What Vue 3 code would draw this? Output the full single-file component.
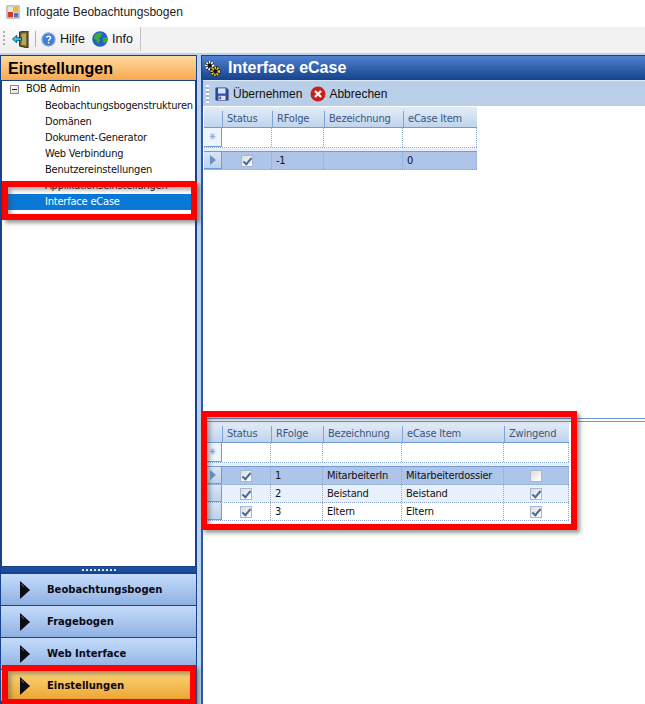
<script setup>
const tree = ['Beobachtungsbogenstrukturen','Domänen','Dokument-Generator','Web Verbindung','Benutzereinstellungen','Applikationseinstellungen']
const nav = [
  { label: 'Beobachtungsbogen', active: false },
  { label: 'Fragebogen', active: false },
  { label: 'Web Interface', active: false },
  { label: 'Einstellungen', active: true }
]
const topCols = [['Status',50],['RFolge',52],['Bezeichnung',79],['eCase Item',74]]
const botCols = [['Status',49],['RFolge',52],['Bezeichnung',79],['eCase Item',102],['Zwingend',65]]
const botRows = [
  { n:'1', b:'MitarbeiterIn', e:'Mitarbeiterdossier', z:false, sel:true },
  { n:'2', b:'Beistand', e:'Beistand', z:true, alt:true },
  { n:'3', b:'Eltern', e:'Eltern', z:true }
]
</script>

<template>
  <div class="app">
    <div class="title">
      <svg class="ti" viewBox="0 0 16 16">
        <rect x="1" y="1" width="14" height="14" fill="#e8e4dc" stroke="#9a9a9a"/>
        <rect x="8" y="2" width="6" height="6" fill="#f2b632"/>
        <rect x="2" y="8" width="6" height="6" fill="#d8382c"/>
        <rect x="9" y="9" width="5" height="5" fill="#4a78c8"/>
      </svg>
      <span>Infogate Beobachtungsbogen</span>
    </div>
    <div class="toolbar">
      <div class="strip">
        <span class="grip"></span>
        <svg class="door" viewBox="0 0 18 18">
          <path d="M8 1 L17 0 V18 L8 16Z" fill="#6e5f2a" stroke="#2f2c18"/>
          <path d="M10 3 L15 2.4 V15.4 L10 14.6Z" fill="#b5a55e"/>
          <path d="M0.5 8.5 L5 4.5 V7 H10 V10 H5 V12.5Z" fill="#35c4e8" stroke="#0f2f4c" stroke-width=".8"/>
        </svg>
        <span class="sep"></span>
        <svg class="tbi help" viewBox="0 0 16 16">
          <circle cx="8" cy="8" r="7" fill="#3f7fdc" stroke="#8fa9d8" stroke-width="1.4"/>
          <path d="M5.8 6.2 C6 3.9 10.3 4 10.2 6.3 C10.1 7.8 8.1 7.8 8.1 9.5" fill="none" stroke="#fff" stroke-width="1.5"/>
          <rect x="7.3" y="10.6" width="1.6" height="1.6" fill="#fff"/>
        </svg>
        <span class="tbt hilfe">Hi<u>l</u>fe</span>
        <svg class="tbi globe" viewBox="0 0 16 16">
          <circle cx="8" cy="8" r="7.8" fill="#1f62c4"/>
          <path d="M3 3.5 C6 1 9 1.5 10 3 L9 6 L7 7 L8 10 L6 13 L4 9 L1.5 7Z" fill="#3fa83a"/>
          <path d="M11 7 L15 6 L15 10 L12 13 L11 10Z" fill="#3fa83a"/>
        </svg>
        <span class="tbt">Info</span>
      </div>
    </div>

    <div class="main">
      <aside class="left">
        <div class="lhead">Einstellungen</div>
        <div class="tree">
          <div class="root"><span class="minus"></span>BOB Admin</div>
          <div v-for="t in tree" :key="t" class="leaf">{{ t }}</div>
          <div class="leaf selected">Interface eCase</div>
        </div>
        <div class="splitdots"><i v-for="n in 9" :key="n"></i></div>
        <div v-for="n in nav" :key="n.label" class="navbtn" :class="{ active: n.active }">
          <svg class="arrow" viewBox="0 0 10 18"><path d="M0 0 L10 9 L0 18Z" fill="#0c0c14"/><path d="M1 3 L4 6" stroke="#666" fill="none"/></svg>
          <span>{{ n.label }}</span>
        </div>
      </aside>

      <section class="right">
        <div class="rhead">
          <svg class="gears" viewBox="0 0 18 18">
            <circle cx="6" cy="6" r="5" fill="#111"/>
            <circle cx="6" cy="6" r="3.6" fill="none" stroke="#fff" stroke-width="2.6" stroke-dasharray="1.6 1"/>
            <circle cx="12" cy="12" r="5.4" fill="#111"/>
            <circle cx="12" cy="12" r="3.6" fill="none" stroke="#f0d020" stroke-width="2.8" stroke-dasharray="1.6 1"/>
          </svg>
          <span>Interface eCase</span>
        </div>
        <div class="rbody">
          <div class="rtools">
            <span class="grip small"></span>
            <svg class="tbi" viewBox="0 0 16 16">
              <path d="M1 1 H13 L15 3 V15 H1Z" fill="#2f4fa8" stroke="#1c2c6c" stroke-width=".8"/>
              <rect x="3.5" y="1.5" width="8.5" height="6" fill="#d8e4f8"/>
              <rect x="4" y="10" width="8" height="5" fill="#e4e4e4"/>
              <rect x="5" y="11" width="2" height="3" fill="#2f4fa8"/>
            </svg>
            <span class="rt">Übernehmen</span>
            <svg class="tbi cancel" viewBox="0 0 16 16">
              <circle cx="8" cy="8" r="7.5" fill="#c8201c"/>
              <path d="M5 5 L11 11 M11 5 L5 11" stroke="#fff" stroke-width="2.4"/>
            </svg>
            <span class="rt">Abbrechen</span>
          </div>

          <div class="pane top">
            <div class="grid">
              <div class="grow ghead">
                <div class="rh hh"></div>
                <div v-for="c in topCols" :key="c[0]" class="gh" :style="{ width: c[1] + 'px' }">{{ c[0] }}</div>
              </div>
              <div class="grow gnew">
                <div class="rh star">✳</div>
                <div v-for="c in topCols" :key="c[0]" class="gc" :style="{ width: c[1] + 'px' }"></div>
              </div>
              <div class="gsep"></div>
              <div class="grow gdata sel">
                <div class="rh"><i class="tri"></i></div>
                <div class="gc center" style="width:50px"><span class="chk on"></span></div>
                <div class="gc" style="width:52px">-1</div>
                <div class="gc" style="width:79px"></div>
                <div class="gc" style="width:74px">0</div>
              </div>
            </div>
          </div>

          <div class="hsplit"></div>

          <div class="pane bottom">
            <div class="grid">
              <div class="grow ghead">
                <div class="rh hh"></div>
                <div v-for="c in botCols" :key="c[0]" class="gh" :style="{ width: c[1] + 'px' }">{{ c[0] }}</div>
              </div>
              <div class="grow gnew">
                <div class="rh star">✳</div>
                <div v-for="c in botCols" :key="c[0]" class="gc" :style="{ width: c[1] + 'px' }"></div>
              </div>
              <div class="gsep"></div>
              <div v-for="r in botRows" :key="r.n" class="grow gdata" :class="{ sel: r.sel, alt: r.alt }">
                <div class="rh"><i v-if="r.sel" class="tri"></i></div>
                <div class="gc center" style="width:49px"><span class="chk on"></span></div>
                <div class="gc" style="width:52px">{{ r.n }}</div>
                <div class="gc" style="width:79px">{{ r.b }}</div>
                <div class="gc" style="width:102px">{{ r.e }}</div>
                <div class="gc center" style="width:65px"><span class="chk" :class="{ on: r.z }"></span></div>
              </div>
            </div>
          </div>
        </div>
      </section>
    </div>

    <div class="mark m1"></div>
    <div class="mark m2"></div>
    <div class="mark m3"></div>
  </div>
</template>

<style scoped>
.app { position: relative; width: 645px; height: 704px; overflow: hidden; background: #fff; font-family: "Liberation Sans", Arial, sans-serif; font-size: 12px; color: #111; }
.title { height: 27px; display: flex; align-items: center; gap: 6px; padding: 0 0 4px 6px; box-sizing: border-box; font-size: 12px; color: #222; }
.ti { width: 14px; height: 14px; }
.toolbar { height: 26px; background: #f2f2f2; }
.strip { width: 141px; height: 24px; display: flex; align-items: center; background: linear-gradient(#fafafa, #efefef); border-right: 1px solid #c4c4c4; box-sizing: border-box; padding-left: 3px; }
.grip { width: 2px; height: 16px; background: repeating-linear-gradient(#b0b0b0 0 2px, transparent 2px 4px); margin-right: 7px; }
.grip.small { margin: 0 6px 0 2px; background: repeating-linear-gradient(#fff 0 2px, #9db6d8 2px 4px); height: 18px; width: 3px; }
.door { width: 17px; height: 17px; }
.sep { width: 1px; height: 16px; background: #b0b0b0; margin: 0 5px 0 6px; }
.tbi { width: 14px; height: 14px; flex: none; }
.tbt { margin-left: 4px; font-size: 12.5px; }
.hilfe { margin-right: 7px; }
.help { width: 15px; height: 15px; }
.globe { width: 16px; height: 16px; }

.main { height: 651px; display: flex; background: #bcd2ee; padding-top: 2px; box-sizing: border-box; }
.left { width: 197px; height: 649px; flex: none; display: flex; flex-direction: column; background: #15428b; box-sizing: border-box; border-left: 1px solid #15428b; border-right: 1px solid #15428b; }
.lhead { height: 25px; flex: none; box-sizing: border-box; padding: 2px 0 0 7px; font-size: 16px; line-height: 21px; font-weight: bold; color: #000; background: linear-gradient(#fdd9a0, #f9a94f); border-top: 1px solid #15428b; }
.tree { height: 487px; flex: none; box-sizing: border-box; background: #fff; border: 1px solid #15428b; font-family: "DejaVu Sans Condensed", "DejaVu Sans", sans-serif; font-stretch: condensed; font-size: 11px; letter-spacing: -0.2px; overflow: hidden; color: #111; }
.root { height: 17px; line-height: 16px; display: flex; align-items: flex-start; padding-left: 8px; }
.minus { width: 7px; height: 7px; border: 1px solid #888; margin: 4px 7px 0 0; position: relative; background: linear-gradient(135deg, #fff, #ddd); }
.minus::after { content: ""; position: absolute; left: 1px; right: 1px; top: 3px; height: 1px; background: #222; }
.leaf { height: 16px; line-height: 16px; padding-left: 43px; white-space: nowrap; }
.selected { background: #0a78d6; color: #fff; }
.splitdots { height: 5px; flex: none; display: flex; justify-content: center; align-items: center; gap: 2px; background: #1c4e9c; margin-bottom: 2px; }
.splitdots i { width: 2px; height: 2px; background: #dfe8f5; }
.navbtn { height: 32px; flex: none; box-sizing: border-box; display: flex; align-items: center; padding-left: 19px; gap: 17px; background: linear-gradient(#c4dcfa, #8fb1e2); border-bottom: 1px solid #15428b; font-family: "DejaVu Sans", sans-serif; font-weight: bold; font-size: 10px; color: #0a0a14; }
.navbtn.active { background: linear-gradient(#f9d77c, #eea32f); }
.arrow { width: 10px; height: 18px; flex: none; }

.right { margin-left: 4px; flex: 1; height: 649px; min-width: 0; display: flex; flex-direction: column; }
.rhead { height: 25px; flex: none; display: flex; align-items: center; gap: 7px; padding-left: 2px; box-sizing: border-box; font-size: 16px; font-weight: bold; color: #fff; background: linear-gradient(#4f82d0, #15428b); border-top: 1px solid #15428b; border-left: 1px solid #15428b; }
.gears { width: 17px; height: 17px; }
.rbody { flex: 1; display: flex; flex-direction: column; background: #fff; border-left: 2px solid #2a58a8; min-height: 0; }
.rtools { height: 27px; flex: none; display: flex; align-items: center; box-sizing: border-box; padding-left: 1px; background: #b9cfe8; border-bottom: 1px solid #fff; border-top: 1px solid #dce8f6; font-size: 12px; color: #111; }
.rt { margin-left: 4px; }
.rt:last-child { margin-left: 3px; }
.cancel { margin-left: 8px; width: 16px; height: 16px; }
.pane { flex: none; background: #fff; }
.pane.top { height: 311px; }
.pane.bottom { flex: 1; }
.hsplit { height: 4px; flex: none; box-sizing: border-box; border-top: 1px solid #6b98d4; border-bottom: 1px solid #6b98d4; }
.grid { display: flex; flex-direction: column; width: max-content; margin-left: 1px; font-family: "DejaVu Sans Condensed", "DejaVu Sans", sans-serif; font-stretch: condensed; letter-spacing: -0.2px; }
.grow { display: flex; }
.ghead { height: 21px; background: linear-gradient(#e2ecf8, #c0d4ec); border-bottom: 1px solid #6f9bd6; box-sizing: border-box; }
.gh { box-sizing: border-box; padding-left: 4px; border-left: 1px solid #7fa3d4; color: #3a5580; font-size: 11px; margin: 4px 0 0; line-height: 16px; }
.gnew { height: 20px; box-sizing: border-box; border-bottom: 1px dotted #8aa8d0; }
.gsep { height: 4px; background: #e9f0fa; border-bottom: 1px solid #6f9bd6; box-sizing: border-box; }
.gdata { height: 18px; box-sizing: border-box; border-bottom: 1px dotted #8aa8d0; background: #fff; font-size: 11px; line-height: 17px; }
.gdata.sel { background: #aec4e8; }
.gdata.alt { background: #e8f1fc; }
.rh { width: 18px; flex: none; box-sizing: border-box; background: linear-gradient(#d9e6f6, #bed2ea); border-right: 1px solid #6f9bd6; border-bottom: 1px solid #6f9bd6; display: flex; align-items: center; justify-content: center; }
.hh { border-bottom: 0; border-right: 0; background: transparent; }
.star { color: #6f9bd6; font-family: "DejaVu Sans", sans-serif; font-size: 10px; line-height: 18px; background: #eef4fb; }
.gc { box-sizing: border-box; padding-left: 4px; border-right: 1px dotted #8aa8d0; }
.center { display: flex; align-items: center; justify-content: center; padding-left: 0; }
.tri { width: 0; height: 0; border-left: 6px solid #6a90c8; border-top: 5px solid transparent; border-bottom: 5px solid transparent; }
.chk { width: 10px; height: 10px; border: 1px solid #a6b8d2; background: linear-gradient(135deg, #dcdcdc, #fff); position: relative; display: block; }
.chk.on::after { content: ""; position: absolute; left: 3px; top: 0; width: 3px; height: 7px; border: solid #4a6a9c; border-width: 0 2px 2px 0; transform: rotate(40deg); }

.mark { position: absolute; box-sizing: border-box; border: 6px solid #ff0000; box-shadow: 3px 3px 4px rgba(70,70,70,.55), inset 3px 3px 4px rgba(70,70,70,.45); pointer-events: none; }
.m1 { left: 2px; top: 181px; width: 195px; height: 39px; }
.m2 { left: 201px; top: 411px; width: 376px; height: 119px; }
.m3 { left: 2px; top: 665px; width: 194px; height: 39px; border-bottom-width: 5px; }
</style>
